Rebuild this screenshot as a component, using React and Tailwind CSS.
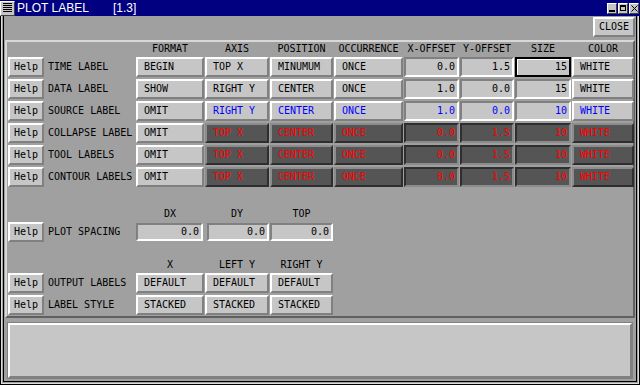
import React from 'react';

const raised = 'border-2 border-t-white border-l-white border-r-[#808080] border-b-[#808080] bg-[#c6c6c6]';
const raisedDark = 'border-2 border-t-[#8c8c8c] border-l-[#8c8c8c] border-r-[#2e2e2e] border-b-[#2e2e2e] bg-[#555555]';
const sunken = 'border-2 border-t-[#808080] border-l-[#808080] border-r-white border-b-white bg-[#c6c6c6]';
const sunkenDark = 'border-2 border-t-[#2e2e2e] border-l-[#2e2e2e] border-r-[#8c8c8c] border-b-[#8c8c8c] bg-[#555555]';

const labelRows = [
  { label: 'TIME LABEL', format: 'BEGIN', axis: 'TOP X', pos: 'MINUMUM', occ: 'ONCE', x: '0.0', y: '1.5', size: '15', color: 'WHITE', mode: 'normal', focus: true },
  { label: 'DATA LABEL', format: 'SHOW', axis: 'RIGHT Y', pos: 'CENTER', occ: 'ONCE', x: '1.0', y: '0.0', size: '15', color: 'WHITE', mode: 'normal' },
  { label: 'SOURCE LABEL', format: 'OMIT', axis: 'RIGHT Y', pos: 'CENTER', occ: 'ONCE', x: '1.0', y: '0.0', size: '10', color: 'WHITE', mode: 'blue' },
  { label: 'COLLAPSE LABEL', format: 'OMIT', axis: 'TOP X', pos: 'CENTER', occ: 'ONCE', x: '0.0', y: '1.5', size: '10', color: 'WHITE', mode: 'off' },
  { label: 'TOOL LABELS', format: 'OMIT', axis: 'TOP X', pos: 'CENTER', occ: 'ONCE', x: '0.0', y: '1.5', size: '10', color: 'WHITE', mode: 'off' },
  { label: 'CONTOUR LABELS', format: 'OMIT', axis: 'TOP X', pos: 'CENTER', occ: 'ONCE', x: '0.0', y: '1.5', size: '10', color: 'WHITE', mode: 'off' },
];

const grid = 'grid grid-cols-[36px_90px_68px_64px_63px_69px_55px_54px_56px_62px] gap-x-px';

function HelpButton() {
  return <div className={`${raised} h-full flex items-center justify-center`}>Help</div>;
}

function Button({ text, mode = 'normal' }) {
  if (mode === 'off') {
    return <div className={`${raisedDark} h-full flex items-center pl-[6px] text-[#ff0000]`}>{text}</div>;
  }
  const color = mode === 'blue' ? 'text-[#0000ff]' : 'text-black';
  return <div className={`${raised} h-full flex items-center pl-[6px] ${color}`}>{text}</div>;
}

function Field({ value, mode = 'normal', focus }) {
  if (mode === 'off') {
    return <div className={`${sunkenDark} h-full flex items-center justify-end pr-[2px] text-[#ff0000]`}>{value}</div>;
  }
  if (focus) {
    return (
      <div className="h-full border-2 border-black bg-[#c6c6c6] shadow-[inset_1px_1px_0_#ffffff] flex items-center justify-end pr-[2px]">
        {value}
      </div>
    );
  }
  const color = mode === 'blue' ? 'text-[#0000ff]' : 'text-black';
  return <div className={`${sunken} h-full flex items-center justify-end pr-[2px] ${color}`}>{value}</div>;
}

function Head({ children }) {
  return <div className="flex items-center justify-center">{children}</div>;
}

function TitleBar() {
  return (
    <div className="h-[16px] bg-[#000080] flex items-center">
      <div className="w-[15px] h-[15px] bg-[#c6c6c6] border border-t-white border-l-white border-r-[#404040] border-b-[#404040] flex items-center justify-center">
        <svg width="9" height="10" viewBox="0 0 9 10">
          {[0, 2, 4, 6, 8].map((y) => (
            <rect key={y} x="0" y={y} width="9" height="1" fill="#000" />
          ))}
        </svg>
      </div>
      <div className="ml-[2px] text-white font-['Liberation_Sans',Arial,sans-serif] text-[12px] leading-none flex">
        <span className="w-[96px]">PLOT LABEL</span>
        <span>[1.3]</span>
      </div>
      <div className="ml-auto flex gap-px pr-px">
        <div className="w-[10px] h-[11px] bg-[#c6c6c6] border border-t-white border-l-white border-r-[#404040] border-b-[#404040] flex items-end justify-center pb-[1px]">
          <div className="w-[6px] h-[2px] bg-black" />
        </div>
        <div className="w-[10px] h-[11px] bg-[#c6c6c6] border border-t-white border-l-white border-r-[#404040] border-b-[#404040] flex items-center justify-center">
          <div className="w-[6px] h-[6px] border border-black border-t-2" />
        </div>
        <div className="w-[10px] h-[11px] bg-[#c6c6c6] border border-t-white border-l-white border-r-[#404040] border-b-[#404040] flex items-center justify-center">
          <svg width="7" height="7" viewBox="0 0 7 7">
            <path d="M0.5 0.5 L6.5 6.5 M6.5 0.5 L0.5 6.5" stroke="#000" strokeWidth="1" />
          </svg>
        </div>
      </div>
    </div>
  );
}

export default function App() {
  return (
    <div className="w-[640px] h-[385px] bg-[#a0a0a0] flex flex-col overflow-hidden font-['DejaVu_Sans_Mono','Liberation_Mono',monospace] text-[10px] leading-none text-black">
      <TitleBar />
      <div className="flex-1 flex flex-col border-x border-b border-black">
        <div className="flex-1 flex flex-col border-x border-b border-[#dcdcdc]">
          <div className="flex-1 flex flex-col border-x border-b border-[#a0a0a0]">
            <div className="flex-1 flex flex-col border-x border-b border-black pb-[2px]">
              <div className="flex justify-end mt-px mr-[1px] h-[20px]">
                <div className={`${raised} w-[42px] flex items-center justify-center`}>CLOSE</div>
              </div>

              <div className="mt-[3px] mx-px h-[278px] border-2 border-t-[#d8d8d8] border-l-[#d8d8d8] border-b-[#606060] border-r-[#606060] pl-px">
                <div className={`${grid} grid-rows-[13px_repeat(6,20px)] gap-y-[2px]`}>
                  <div />
                  <div />
                  <Head>FORMAT</Head>
                  <Head>AXIS</Head>
                  <Head>POSITION</Head>
                  <Head>OCCURRENCE</Head>
                  <Head>X-OFFSET</Head>
                  <Head>Y-OFFSET</Head>
                  <Head>SIZE</Head>
                  <Head>COLOR</Head>
                  {labelRows.map((r) => {
                    const m = r.mode;
                    return (
                      <React.Fragment key={r.label}>
                        <HelpButton />
                        <div className="flex items-center pl-[3px]">{r.label}</div>
                        <Button text={r.format} />
                        <Button text={r.axis} mode={m} />
                        <Button text={r.pos} mode={m} />
                        <Button text={r.occ} mode={m} />
                        <Field value={r.x} mode={m} />
                        <Field value={r.y} mode={m} />
                        <Field value={r.size} mode={m} focus={r.focus} />
                        <Button text={r.color} mode={m} />
                      </React.Fragment>
                    );
                  })}
                </div>

                <div className={`${grid} grid-rows-[13px_20px] gap-y-[2px] mt-[20px]`}>
                  <div />
                  <div />
                  <Head>DX</Head>
                  <Head>DY</Head>
                  <Head>TOP</Head>
                  <div className="col-span-5" />
                  <HelpButton />
                  <div className="flex items-center pl-[3px]">PLOT SPACING</div>
                  <div className="py-px pr-px"><Field value="0.0" /></div>
                  <div className="py-px pl-[2px]"><Field value="0.0" /></div>
                  <div className="py-px"><Field value="0.0" /></div>
                </div>

                <div className={`${grid} grid-rows-[13px_20px_20px] gap-y-[2px] mt-[16px]`}>
                  <div />
                  <div />
                  <Head>X</Head>
                  <Head>LEFT Y</Head>
                  <Head>RIGHT Y</Head>
                  <div className="col-span-5" />
                  <HelpButton />
                  <div className="flex items-center pl-[3px]">OUTPUT LABELS</div>
                  <Button text="DEFAULT" />
                  <Button text="DEFAULT" />
                  <Button text="DEFAULT" />
                  <div className="col-span-5" />
                  <HelpButton />
                  <div className="flex items-center pl-[3px]">LABEL STYLE</div>
                  <Button text="STACKED" />
                  <Button text="STACKED" />
                  <Button text="STACKED" />
                </div>
              </div>

              <div className="mt-[4px] mx-[3px] flex-1 border border-[#808080]">
                <div className="h-full border-2 border-t-white border-l-white border-r-[#808080] border-b-[#808080] bg-[#c6c6c6]" />
              </div>
            </div>
          </div>
        </div>
      </div>
    </div>
  );
}
